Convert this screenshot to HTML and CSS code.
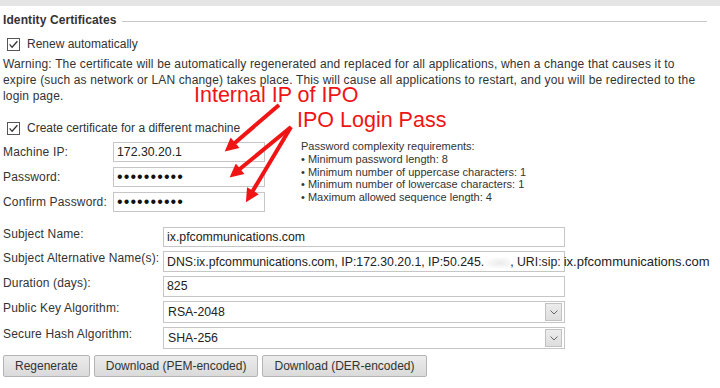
FILE: index.html
```html
<!DOCTYPE html>
<html lang="en">
<head>
    <meta charset="UTF-8">
    <meta name="viewport" content="width=device-width, initial-scale=1.0">
    <title>Identity Certificates</title>
    <link rel="stylesheet" href="styles.css">
</head>
<body>
    <div class="topbar"></div>
    <div class="page">
        <div class="section-head">
            <h2>Identity Certificates</h2>
            <span class="rule"></span>
        </div>

        <label class="check">
            <svg class="box" width="13" height="13" viewBox="0 0 13 13"><rect x="0.5" y="0.5" width="12" height="12" fill="#fff" stroke="#555"/><polyline points="2.6,6.4 5.1,9.3 10.4,3.2" fill="none" stroke="#333" stroke-width="1.3"/></svg>
            Renew automatically
        </label>
        <p class="warning">Warning: The certificate will be automatically regenerated and replaced for all applications, when a change that causes it to expire (such as network or LAN change) takes place. This will cause all applications to restart, and you will be redirected to the login page.</p>

        <label class="check create">
            <svg class="box" width="13" height="13" viewBox="0 0 13 13"><rect x="0.5" y="0.5" width="12" height="12" fill="#fff" stroke="#555"/><polyline points="2.6,6.4 5.1,9.3 10.4,3.2" fill="none" stroke="#333" stroke-width="1.3"/></svg>
            Create certificate for a different machine
        </label>

        <div class="machine">
            <div class="machine-fields">
                <span class="label">Machine IP:</span>
                <div class="field">172.30.20.1</div>
                <span class="label">Password:</span>
                <div class="field secret">••••••••••</div>
                <span class="label">Confirm Password:</span>
                <div class="field secret">••••••••••</div>
            </div>
            <div class="rules">
                Password complexity requirements:<br>
                • Minimum password length: 8<br>
                • Minimum number of uppercase characters: 1<br>
                • Minimum number of lowercase characters: 1<br>
                • Maximum allowed sequence length: 4
            </div>
        </div>

        <div class="cert-fields">
            <span class="label">Subject Name:</span>
            <div class="field">ix.pfcommunications.com</div>
            <span class="label">Subject Alternative Name(s):</span>
            <div class="field tall overflow">DNS:ix.pfcommunications.com, IP:172.30.20.1, IP:50.245.<span class="redact"></span>, URI:sip:<span class="spill">ix.pfcommunications.com</span></div>
            <span class="label">Duration (days):</span>
            <div class="field tall">825</div>
            <span class="label">Public Key Algorithm:</span>
            <div class="field select">RSA-2048<span class="drop"><svg width="8" height="5" viewBox="0 0 8 5"><polyline points="0.5,0.5 4,4 7.5,0.5" fill="none" stroke="#666"/></svg></span></div>
            <span class="label">Secure Hash Algorithm:</span>
            <div class="field select">SHA-256<span class="drop"><svg width="8" height="5" viewBox="0 0 8 5"><polyline points="0.5,0.5 4,4 7.5,0.5" fill="none" stroke="#666"/></svg></span></div>
        </div>

        <div class="actions">
            <button class="btn">Regenerate</button>
            <button class="btn">Download (PEM-encoded)</button>
            <button class="btn">Download (DER-encoded)</button>
        </div>
    </div>

    <!-- red annotations drawn over the form -->
    <div class="notes">
        <div class="note note-ip">Internal IP of IPO</div>
        <div class="note note-pass">IPO Login Pass</div>
        <svg class="arrows" width="720" height="388" viewBox="0 0 720 388">
            <defs>
                <marker id="head" viewBox="0 0 10 10" refX="2" refY="5" markerWidth="4" markerHeight="3.4" orient="auto">
                    <path d="M0,0 L10,5 L0,10 z" fill="#f01414"/>
                </marker>
            </defs>
            <g stroke="#f01414" stroke-width="4" marker-end="url(#head)">
                <line x1="279" y1="105" x2="233" y2="144.5"/>
                <line x1="291" y1="127" x2="238" y2="170.5"/>
                <line x1="291" y1="127" x2="251.5" y2="193"/>
            </g>
        </svg>
    </div>
</body>
</html>
```

FILE: styles.css
```css
body {
    margin: 0;
    font-family: "Liberation Sans", Arial, sans-serif;
    font-size: 12px;
    color: #333;
    background: #fff;
    width: 720px;
    height: 388px;
    position: relative;
    overflow: hidden;
}
.topbar {
    height: 6px;
    background: #e5e5e5;
}
.page {
    padding: 0 13px 0 3px;
}
.section-head {
    display: flex;
    align-items: center;
    gap: 6px;
    margin-top: 6px;
    height: 16px;
}
.section-head h2 {
    margin: 0;
    font-size: 12px;
    font-weight: bold;
    color: #333;
    line-height: 16px;
    letter-spacing: 0.1px;
}
.rule {
    flex: 1;
    height: 1px;
    background: #c8c8c8;
    margin-top: 2px;
}
.check {
    display: flex;
    align-items: center;
    gap: 7px;
    height: 16px;
    margin-top: 8px;
    padding-left: 4px;
    font-size: 12px;
}
.check.create {
    margin-top: 16px;
}
.warning {
    margin: 4px 0 0 0;
    max-width: 696px;
    line-height: 16px;
    letter-spacing: 0.16px;
}
.machine {
    display: flex;
    margin-top: 6px;
}
.machine-fields {
    display: grid;
    grid-template-columns: 110px 152px;
    grid-auto-rows: 20px;
    row-gap: 5px;
    align-items: center;
}
.label {
    white-space: nowrap;
    letter-spacing: 0.15px;
}
.field {
    box-sizing: border-box;
    height: 20px;
    border: 1px solid #c6c6c6;
    background: #fff;
    padding: 0 3px;
    font-size: 12.3px;
    line-height: 18px;
    color: #222;
    white-space: nowrap;
    overflow: hidden;
}
.field.secret {
    font-size: 16px;
    letter-spacing: 1.1px;
    line-height: 18px;
    color: #111;
}
.field.tall {
    height: 21px;
    line-height: 19px;
}
.field.overflow {
    overflow: visible;
}
.redact {
    display: inline-block;
    width: 26px;
    height: 12px;
    vertical-align: middle;
    background: radial-gradient(ellipse at 60% 50%, #ececec 0, #f6f6f6 45%, #fff 75%);
}
.spill {
    font-size: 13px;
    margin-left: 3px;
}
.rules {
    margin-left: 36px;
    font-size: 11px;
    line-height: 12.8px;
    color: #333;
    margin-top: -2px;
}
.cert-fields {
    display: grid;
    grid-template-columns: 160px 402px;
    row-gap: 4px;
    margin-top: 15px;
    align-items: start;
}
.cert-fields .label {
    line-height: 14px;
}
.field.select {
    position: relative;
    height: 22px;
    line-height: 20px;
    padding-left: 4px;
}
.drop {
    position: absolute;
    top: 1px;
    right: 2px;
    width: 17px;
    height: 18px;
    box-sizing: border-box;
    border: 1px solid #c2c2c2;
    background: linear-gradient(#ececec, #dedede);
    display: flex;
    align-items: center;
    justify-content: center;
}
.actions {
    display: flex;
    gap: 4px;
    margin-top: 6px;
}
.btn {
    height: 22px;
    padding: 0 11px;
    font-family: "Liberation Sans", Arial, sans-serif;
    font-size: 12px;
    color: #333;
    border: 1px solid #b4b4b4;
    border-radius: 2px;
    background: linear-gradient(#ececec, #dadada);
    cursor: pointer;
}
.notes {
    position: absolute;
    top: 0;
    left: 0;
    width: 720px;
    height: 388px;
    pointer-events: none;
}
.note {
    position: absolute;
    font-size: 21.5px;
    line-height: 15px;
    color: #f01414;
    white-space: nowrap;
}
.note-ip {
    left: 194px;
    top: 88px;
}
.note-pass {
    left: 297px;
    top: 113px;
}
.arrows {
    position: absolute;
    top: 0;
    left: 0;
}
```
